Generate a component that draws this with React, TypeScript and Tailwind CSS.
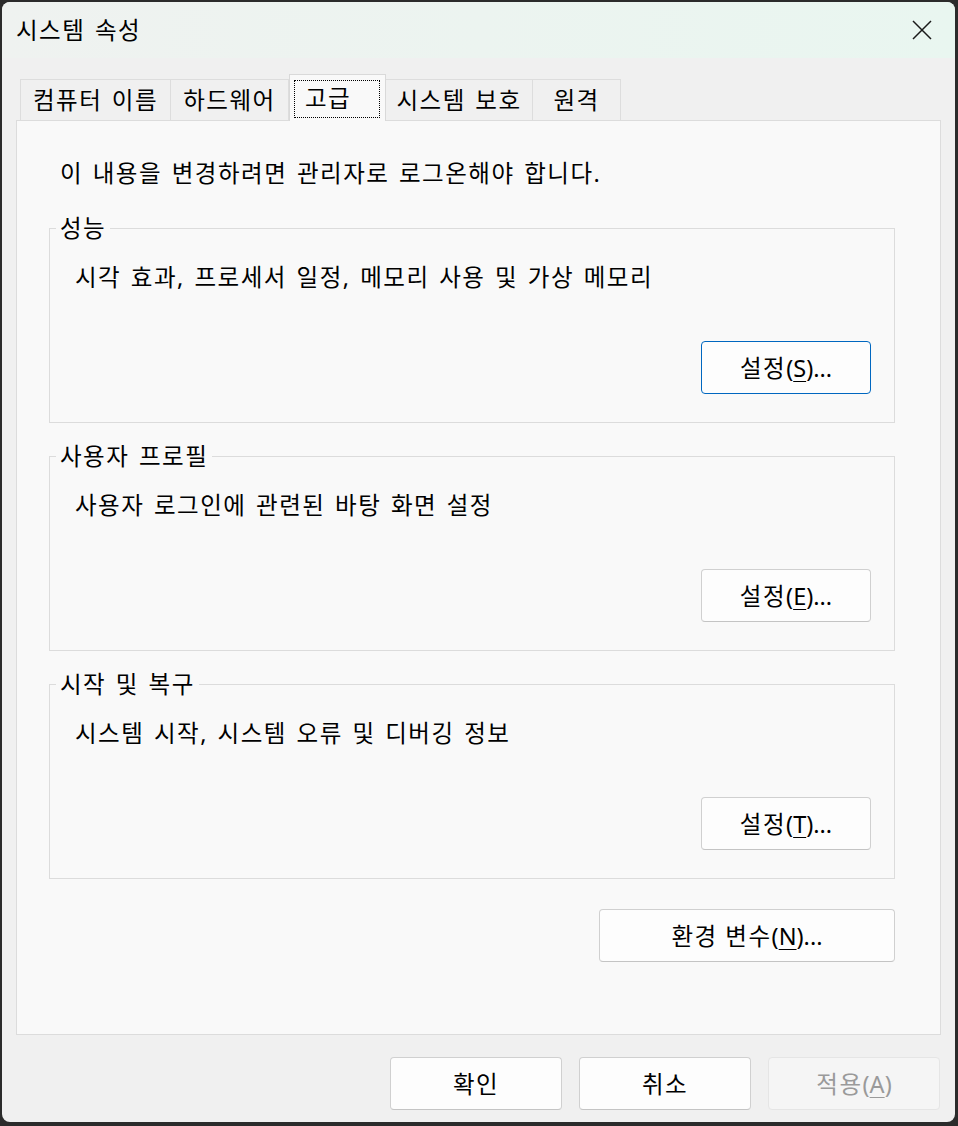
const tabs = [
  { label: "컴퓨터 이름", width: "w-[151px]" },
  { label: "하드웨어", width: "w-[118px]" },
  { label: "고급", width: "w-[97px]", active: true },
  { label: "시스템 보호", width: "w-[147px]" },
  { label: "원격", width: "w-[88px]" },
];

const groups = [
  { title: "성능", desc: "시각 효과, 프로세서 일정, 메모리 사용 및 가상 메모리", key: "S", primary: true },
  { title: "사용자 프로필", desc: "사용자 로그인에 관련된 바탕 화면 설정", key: "E" },
  { title: "시작 및 복구", desc: "시스템 시작, 시스템 오류 및 디버깅 정보", key: "T" },
];

// "(S)..." style accelerator suffix; latin part is set tighter than hangul
function Accel({ letter, dots = true }: { letter: string; dots?: boolean }) {
  return (
    <span className="tracking-normal">
      (<span className="underline decoration-1 underline-offset-[4px]">{letter}</span>){dots ? "..." : ""}
    </span>
  );
}

function DialogButton({
  children,
  primary,
  disabled,
  className = "",
}: {
  children: React.ReactNode;
  primary?: boolean;
  disabled?: boolean;
  className?: string;
}) {
  const tone = disabled
    ? "border-[#e5e5e5] bg-[#f5f5f5] text-[#9a9a9a]"
    : primary
      ? "border-[#0067c0] bg-[#fdfdfd] text-black"
      : "border-[#d0d0d0] border-b-[#c4c4c4] bg-[#fdfdfd] text-black";
  return (
    <button
      type="button"
      disabled={disabled}
      className={`flex h-[53px] items-center justify-center rounded-[4px] border leading-[32px] ${tone} ${className}`}
    >
      {children}
    </button>
  );
}

export default function App() {
  return (
    <div className="h-[1126px] w-[958px] bg-[#2b2b2b] pl-[2px] pt-[2px] font-['Noto_Sans','Noto_Sans_CJK_KR',sans-serif] text-[23.5px] tracking-[1.5px] text-black [word-spacing:2px]">
      <div className="flex h-[1120px] w-[953px] flex-col overflow-hidden rounded-[8px] bg-[#f0f0f0]">
        {/* title bar */}
        <div className="flex h-[56px] shrink-0 items-center justify-between bg-gradient-to-r from-[#eff2f0] to-[#e9f6f0] pl-[14px] pr-[23px]">
          <span className="leading-[32px]">시스템 속성</span>
          <svg width="20" height="20" viewBox="0 0 20 20" aria-hidden="true">
            <path d="M1 1 L19 19 M19 1 L1 19" stroke="#1a1a1a" strokeWidth="1.5" fill="none" />
          </svg>
        </div>

        {/* tabs */}
        <div className="mt-[16px] flex h-[46px] items-end pl-[18px]">
          {tabs.map((tab, i) =>
            tab.active ? (
              <div
                key={tab.label}
                className={`relative z-10 -mb-px h-[47px] ${tab.width} border border-b-0 border-[#d9d9d9] bg-[#f9f9f9] pl-[4px] pr-[5px] pt-[5px]`}
              >
                <div className="flex h-[38px] items-center border border-dotted border-black pb-[3px] pl-[10px] leading-[32px]">
                  {tab.label}
                </div>
              </div>
            ) : (
              <div
                key={tab.label}
                className={`flex h-[41px] ${tab.width} items-center justify-center border-t border-r border-[#dddddd] bg-[#f0f0f0] leading-[32px] ${i === 0 ? "border-l" : ""}`}
              >
                {tab.label}
              </div>
            ),
          )}
        </div>

        {/* panel */}
        <div className="mx-[14px] flex h-[915px] shrink-0 flex-col border border-[#dcdcdc] bg-[#f9f9f9] px-[32px]">
          <p className="mt-[36px] pl-[11px] leading-[32px]">이 내용을 변경하려면 관리자로 로그온해야 합니다.</p>

          <div className="mt-[23px] flex w-[846px] flex-col gap-[17px]">
            {groups.map((g) => (
              <fieldset key={g.title} className="flex flex-col border border-[#dcdcdc] pb-[28px] pl-[25px] pr-[23px]">
                <legend className="-ml-[19px] px-[4px] leading-[32px]">{g.title}</legend>
                <p className="mt-[17px] leading-[32px]">{g.desc}</p>
                <DialogButton primary={g.primary} className="mt-[48px] w-[170px] self-end">
                  <span>
                    설정<Accel letter={g.key} />
                  </span>
                </DialogButton>
              </fieldset>
            ))}
          </div>

          <DialogButton className="mr-[13px] mt-[30px] w-[296px] self-end">
            <span>
              환경 변수<Accel letter="N" />
            </span>
          </DialogButton>
        </div>

        {/* footer buttons */}
        <div className="mt-[22px] flex justify-end gap-[17px] pr-[15px]">
          <DialogButton className="w-[172px]">확인</DialogButton>
          <DialogButton className="w-[172px]">취소</DialogButton>
          <DialogButton disabled className="w-[172px]">
            <span>
              적용<Accel letter="A" dots={false} />
            </span>
          </DialogButton>
        </div>
      </div>
    </div>
  );
}
